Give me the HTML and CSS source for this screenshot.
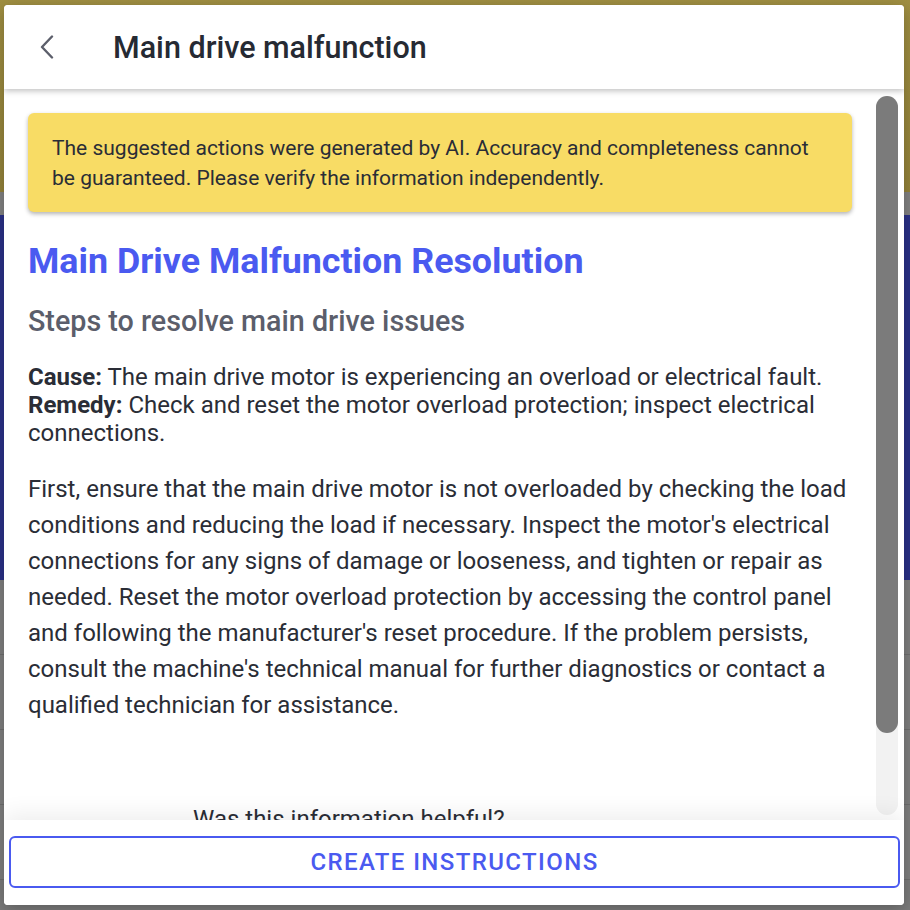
FILE: index.html
```html
<!DOCTYPE html>
<html lang="en">
<head>
	<meta charset="utf-8">
	<title>Main drive malfunction</title>
	<link rel="stylesheet" href="styles.css">
</head>
<body>
<div class="page">
	<div class="page-banner"></div>
	<div class="page-gap"></div>
	<div class="page-hero"></div>
	<div class="page-row"></div>
	<div class="page-row"></div>
	<div class="page-row"></div>
	<div class="page-row"></div>
</div>

<div class="dialog">
	<div class="dialog-header">
		<button class="back" type="button" aria-label="Back">
			<svg width="24" height="24" viewBox="0 0 24 24" fill="none" stroke="currentColor" stroke-width="2.4" stroke-linecap="round" stroke-linejoin="round">
				<path d="M17 1.5 L7 12 L17 22.5"/>
			</svg>
		</button>
		<h2 class="dialog-title">Main drive malfunction</h2>
	</div>

	<div class="dialog-scroll">
		<div class="dialog-body">
			<div class="notice">
				The suggested actions were generated by AI. Accuracy and completeness cannot
				be guaranteed. Please verify the information independently.
			</div>

			<h1 class="result-title">Main Drive Malfunction Resolution</h1>
			<h3 class="result-subtitle">Steps to resolve main drive issues</h3>

			<p class="cause">
				<b>Cause:</b> The main drive motor is experiencing an overload or electrical fault.<br>
				<b>Remedy:</b> Check and reset the motor overload protection; inspect electrical connections.
			</p>

			<p class="steps">
				First, ensure that the main drive motor is not overloaded by checking the load
				conditions and reducing the load if necessary. Inspect the motor's electrical
				connections for any signs of damage or looseness, and tighten or repair as
				needed. Reset the motor overload protection by accessing the control panel
				and following the manufacturer's reset procedure. If the problem persists,
				consult the machine's technical manual for further diagnostics or contact a
				qualified technician for assistance.
			</p>

			<div class="feedback">
				<p class="feedback-question">Was this information helpful?</p>
			</div>
		</div>

		<!-- scroll position indicator, content is at the top -->
		<div class="scrollbar">
			<div class="scrollbar-thumb"></div>
		</div>
	</div>

	<div class="dialog-footer">
		<button class="btn-outline" type="button">Create instructions</button>
	</div>
</div>
</body>
</html>
```

FILE: styles.css
```css
html, body {
	margin: 0;
	height: 100%;
}

body {
	font-family: Roboto, "Liberation Sans", sans-serif;
	background: #7b7b7b;
	overflow: hidden;
}

/* page behind the dialog, already dimmed by the overlay */
.page-banner {
	height: 192px;
	background: linear-gradient(180deg, #a08f42 0%, #94833a 100%);
}

.page-gap {
	height: 23px;
	background: #828282;
}

.page-hero {
	height: 365px;
	background: #2a3187;
}

.page-row {
	height: 74px;
	border-bottom: 1px solid #6f6f6f;
	background: #7f7f7f;
}

.page-row:first-of-type {
	background: #858585;
}

/* dialog */
.dialog {
	position: absolute;
	top: 5px;
	left: 4px;
	width: 900px;
	height: 900px;
	display: flex;
	flex-direction: column;
	background: #fff;
	border-radius: 4px;
	overflow: hidden;
	box-shadow: 0 4px 16px rgba(0, 0, 0, 0.25);
}

.dialog-header {
	position: relative;
	z-index: 2;
	flex: 0 0 84px;
	display: flex;
	align-items: center;
	background: #fff;
	box-shadow: 0 2px 6px rgba(0, 0, 0, 0.25);
}

.back {
	width: 24px;
	height: 24px;
	margin-left: 31px;
	padding: 0;
	border: 0;
	background: none;
	color: #5c5f6b;
}

.back svg {
	display: block;
}

.dialog-title {
	margin: 0 0 0 54px;
	font-size: 30.5px;
	font-weight: 500;
	color: #262a33;
}

.dialog-scroll {
	position: relative;
	flex: 1 1 auto;
	min-height: 0;
}

.dialog-body {
	height: 100%;
	box-sizing: border-box;
	overflow: hidden;
	padding: 24px 0 0 24px;
	color: #2a2d36;
}

.scrollbar {
	position: absolute;
	top: 7px;
	bottom: 5px;
	right: 6px;
	width: 22px;
	background: #f2f2f2;
	border-radius: 11px;
}

.scrollbar-thumb {
	height: 637px;
	background: #7b7b7b;
	border-radius: 11px;
}

.notice {
	width: 776px;
	padding: 20px 24px 19px;
	font-size: 21px;
	line-height: 30px;
	background: #f8dc65;
	border-radius: 6px;
	box-shadow: 0 2px 4px rgba(0, 0, 0, 0.3);
}

.result-title {
	margin: 29px 0 0;
	font-size: 35.8px;
	line-height: 40px;
	font-weight: 700;
	color: #4a5af0;
}

.result-subtitle {
	margin: 23px 0 0;
	font-size: 28.7px;
	line-height: 34px;
	font-weight: 500;
	color: #5b5e6b;
}

.cause {
	width: 824px;
	margin: 25px 0 0;
	font-size: 24px;
	line-height: 28px;
}

.cause b {
	font-weight: 700;
}

.steps {
	width: 824px;
	margin: 24px 0 0;
	font-size: 24px;
	line-height: 36px;
}

.feedback {
	padding: 82px 0 0 165px;
}

.feedback-question {
	margin: 0;
	font-size: 24px;
	line-height: 28px;
}

.dialog-footer {
	position: relative;
	z-index: 2;
	flex: 0 0 auto;
	padding: 16px 4px 17px 5px;
	background: #fff;
	box-shadow: 0 -6px 22px rgba(0, 0, 0, 0.07);
}

.btn-outline {
	display: block;
	width: 100%;
	height: 52px;
	border: 2px solid #4a5af0;
	border-radius: 6px;
	background: #fff;
	color: #4a5af0;
	font-family: Roboto, "Liberation Sans", sans-serif;
	font-size: 24px;
	font-weight: 500;
	letter-spacing: 1.4px;
	text-transform: uppercase;
}
```
